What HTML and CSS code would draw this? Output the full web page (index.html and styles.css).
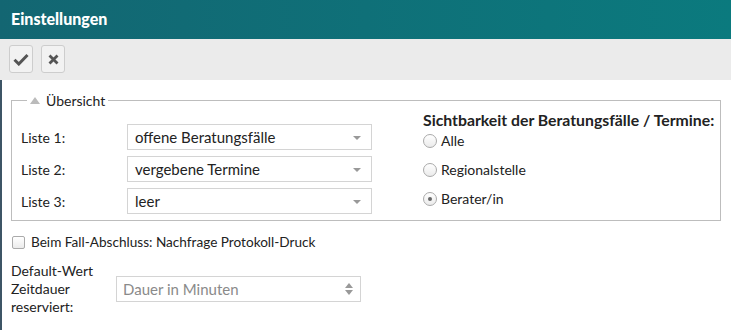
FILE: index.html
```html
<!DOCTYPE html>
<html>
<head>
<meta charset="utf-8">
<link rel="stylesheet" href="styles.css">
</head>
<body>
<div class="dialog">
  <div class="header">Einstellungen</div>
  <div class="toolbar">
    <button class="tbtn" title="OK">
      <svg width="16" height="13" viewBox="0 0 16 13"><path d="M1.5 6.8 L5.8 11 L14.5 2" fill="none" stroke="#555" stroke-width="3"/></svg>
    </button>
    <button class="tbtn" title="Abbrechen">
      <svg width="11" height="11" viewBox="0 0 11 11"><path d="M1.5 1.5 L9.5 9.5 M9.5 1.5 L1.5 9.5" fill="none" stroke="#555" stroke-width="2.8"/></svg>
    </button>
  </div>
  <div class="content">
    <fieldset class="group">
      <legend class="legend"><span class="tri"></span>Übersicht</legend>
      <div class="group-body">
        <div class="lists">
          <div class="row"><label class="lbl">Liste 1:</label><div class="select">offene Beratungsfälle<span class="caret"></span></div></div>
          <div class="row"><label class="lbl">Liste 2:</label><div class="select">vergebene Termine<span class="caret"></span></div></div>
          <div class="row"><label class="lbl">Liste 3:</label><div class="select">leer<span class="caret"></span></div></div>
        </div>
        <div class="visibility">
          <div class="vis-title">Sichtbarkeit der Beratungsfälle / Termine:</div>
          <div class="radio-row first"><span class="radio"></span>Alle</div>
          <div class="radio-row"><span class="radio"></span>Regionalstelle</div>
          <div class="radio-row"><span class="radio checked"></span>Berater/in</div>
        </div>
      </div>
    </fieldset>
    <div class="check-row"><span class="checkbox"></span>Beim Fall-Abschluss: Nachfrage Protokoll-Druck</div>
    <div class="duration-row">
      <div class="dur-label">Default-Wert<br>Zeitdauer<br>reserviert:</div>
      <div class="spinner">Dauer in Minuten<span class="spin"><span class="up"></span><span class="down"></span></span></div>
    </div>
  </div>
</div>
</body>
</html>
```
FILE: styles.css
```css
html, body {
  margin: 0;
  padding: 0;
  background: #fff;
}
body {
  font-family: "Lato", "Open Sans", sans-serif;
  font-size: 14px;
  color: #222;
}
.dialog {
  width: 731px;
  height: 330px;
  display: flex;
  flex-direction: column;
}
.header {
  height: 39px;
  box-sizing: border-box;
  padding: 9px 0 0 11px;
  background: linear-gradient(90deg, #136672 0%, #0b7a7e 100%);
  color: #fff;
  font-weight: 900;
  font-size: 16px;
}
.toolbar {
  height: 41px;
  box-sizing: border-box;
  background: #ebebeb;
  display: flex;
  gap: 8px;
  padding: 6px 0 0 9px;
}
.tbtn {
  width: 24px;
  height: 28px;
  box-sizing: border-box;
  border: 1px solid #cdcdcd;
  border-radius: 3px;
  background: #f2f2f2;
  display: flex;
  align-items: center;
  justify-content: center;
  padding: 0;
}
.content {
  flex: 1;
  border-left: 2px solid #3d5566;
  padding: 10px 10px 0 9px;
}
.group {
  margin: 0;
  border: 1px solid #bdbdbd;
  padding: 0 0 6px 9px;
}
.legend {
  padding: 0 3px;
  margin-left: 6px;
  display: flex;
  align-items: center;
  gap: 6px;
  color: #222;
  height: 20px;
}
.tri {
  width: 0;
  height: 0;
  border-left: 5px solid transparent;
  border-right: 5px solid transparent;
  border-bottom: 7px solid #bbb;
}
.group-body {
  display: flex;
}
.lists {
  display: flex;
  flex-direction: column;
  gap: 6px;
  padding-top: 14px;
}
.row {
  display: flex;
  align-items: center;
}
.lbl {
  width: 106px;
}
.select {
  width: 245px;
  height: 26px;
  box-sizing: border-box;
  border: 1px solid #d4d4d4;
  padding-left: 7px;
  display: flex;
  align-items: center;
  position: relative;
  font-size: 15px;
}
.caret {
  position: absolute;
  right: 10px;
  top: 11px;
  border-left: 4px solid transparent;
  border-right: 4px solid transparent;
  border-top: 4px solid #999;
}
.visibility {
  margin-left: 51px;
}
.vis-title {
  font-weight: bold;
  font-size: 15.8px;
  line-height: 20px;
}
.radio-row {
  display: flex;
  align-items: center;
  height: 29px;
  gap: 4px;
}
.radio-row.first {
  margin-top: -4px;
}
.radio {
  width: 14px;
  height: 14px;
  box-sizing: border-box;
  border: 1px solid #aaa;
  border-radius: 50%;
  background: linear-gradient(#fff, #ebebeb);
  display: flex;
  align-items: center;
  justify-content: center;
}
.radio.checked::after {
  content: "";
  width: 4px;
  height: 4px;
  border-radius: 50%;
  background: #666;
}
.check-row {
  display: flex;
  align-items: center;
  gap: 6px;
  height: 18px;
  margin-top: 12px;
  margin-left: 1px;
  font-size: 13.6px;
}
.checkbox {
  width: 13px;
  height: 13px;
  box-sizing: border-box;
  border: 1px solid #aaa;
  border-radius: 2px;
  background: linear-gradient(#fff, #ebebeb);
}
.duration-row {
  display: flex;
  align-items: center;
  margin-top: 11px;
}
.dur-label {
  width: 105px;
  line-height: 18px;
}
.spinner {
  width: 245px;
  height: 26px;
  box-sizing: border-box;
  border: 1px solid #d4d4d4;
  padding-left: 6px;
  display: flex;
  align-items: center;
  color: #8a8a8a;
  font-size: 15px;
  position: relative;
}
.spin {
  position: absolute;
  right: 7px;
  top: 6px;
  display: flex;
  flex-direction: column;
  gap: 2px;
}
.up {
  border-left: 4px solid transparent;
  border-right: 4px solid transparent;
  border-bottom: 5px solid #999;
}
.down {
  border-left: 4px solid transparent;
  border-right: 4px solid transparent;
  border-top: 5px solid #999;
}
```
